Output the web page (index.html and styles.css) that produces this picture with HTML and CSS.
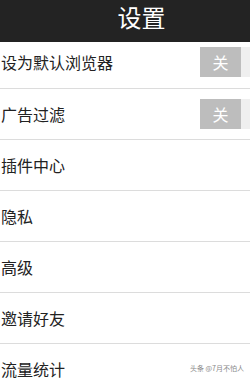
FILE: index.html
```
<!DOCTYPE html>
<html lang="zh-CN">
<head>
<meta charset="utf-8">
<link rel="stylesheet" href="styles.css">
</head>
<body>
<div class="page">
  <header class="header"><h1 class="title">设置</h1></header>
  <ul class="list">
    <li class="row row-first"><span class="label">设为默认浏览器</span><span class="switch"><span class="switch-off">关</span><span class="switch-track"></span></span></li>
    <li class="row"><span class="label">广告过滤</span><span class="switch"><span class="switch-off">关</span><span class="switch-track"></span></span></li>
    <li class="row"><span class="label">插件中心</span></li>
    <li class="row"><span class="label">隐私</span></li>
    <li class="row"><span class="label">高级</span></li>
    <li class="row"><span class="label">邀请好友</span></li>
    <li class="row"><span class="label">流量统计</span></li>
  </ul>
  <div class="watermark">头条 @7月不怕人</div>
</div>
</body>
</html>
```

FILE: styles.css
```
html, body {
  margin: 0;
  padding: 0;
  background: #ffffff;
}
.page {
  position: relative;
  width: 250px;
  height: 380px;
  overflow: hidden;
  font-family: "Noto Sans CJK SC", "Noto Sans", sans-serif;
}
.header {
  height: 42px;
  background: #232323;
  display: flex;
  align-items: center;
  justify-content: center;
  padding: 0 0 8px 33px;
  box-sizing: border-box;
}
.title {
  margin: 0;
  color: #ffffff;
  font-size: 24px;
  font-weight: 400;
  line-height: 1;
}
.list {
  list-style: none;
  margin: 0;
  padding: 0;
}
.row {
  height: 50px;
  border-bottom: 1px solid #dcdcdc;
  display: flex;
  align-items: center;
  justify-content: space-between;
  box-sizing: content-box;
}
.row-first {
  height: 40px;
  padding-bottom: 6px;
}
.label {
  font-size: 16px;
  color: #222222;
  padding-left: 1px;
  line-height: 1;
}
.switch {
  display: flex;
  height: 30px;
  width: 50px;
}
.switch-off {
  width: 41px;
  height: 30px;
  background: #bdbdbd;
  color: #ffffff;
  font-size: 16px;
  display: flex;
  align-items: center;
  justify-content: center;
}
.switch-track {
  flex: 1;
  background: #efefef;
}
.watermark {
  position: absolute;
  right: 6px;
  bottom: 8px;
  font-size: 7px;
  color: #8a8a8a;
  line-height: 1;
}
```
